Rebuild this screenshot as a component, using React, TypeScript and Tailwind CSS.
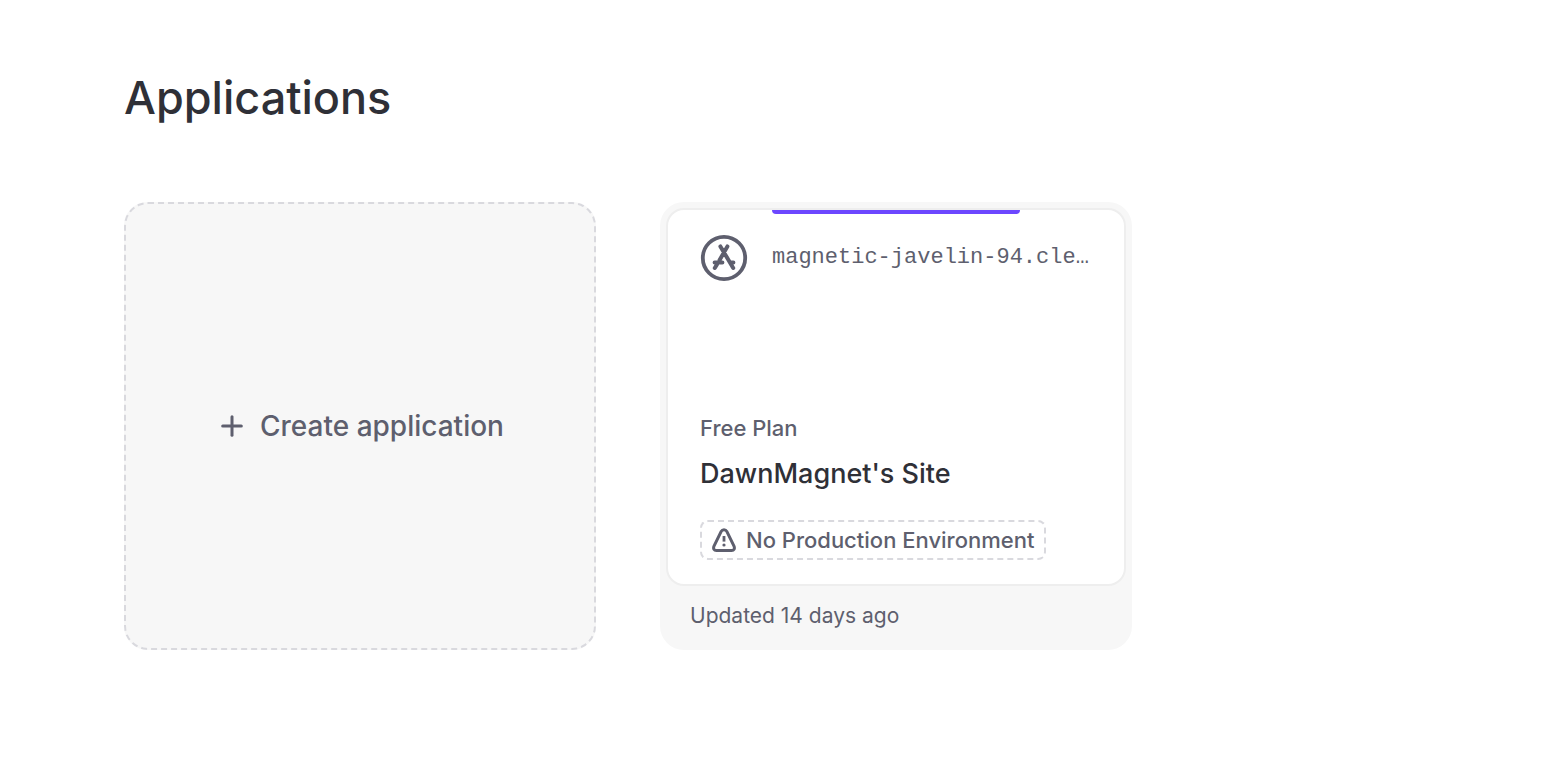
import { Plus } from 'lucide-react';

function AppStoreIcon() {
  return (
    <svg viewBox="0 0 48 48" className="size-12 shrink-0" fill="none" stroke="currentColor" strokeLinecap="round" strokeLinejoin="round" aria-hidden="true">
      <circle cx="24" cy="24" r="21.2" strokeWidth="3.8" />
      <path d="M20.4 12.4 33.2 34M27.4 12.4 19.6 26M17 30.4 14.8 34M14.6 28.4H22.4M30.4 28.4H33.4" strokeWidth="4" />
    </svg>
  );
}

function WarningIcon() {
  return (
    <svg viewBox="0 0 24 24" className="size-6 shrink-0" fill="none" stroke="currentColor" strokeLinecap="round" strokeLinejoin="round" aria-hidden="true">
      <path d="M9.2 3.4C10.4 1.1 13.6 1.1 14.8 3.4L22 18.2C23 20.5 22 22.5 19.6 22.5H4.4C2 22.5 1 20.5 2 18.2Z" strokeWidth="3" />
      <path d="M12 8V13.6" strokeWidth="2.8" strokeLinecap="butt" />
      <circle cx="12" cy="17" r="1.6" fill="currentColor" stroke="none" />
    </svg>
  );
}

function CreateCard() {
  return (
    <button
      type="button"
      className="flex h-112 cursor-pointer items-center justify-center gap-3 rounded-3xl border-2 border-dashed border-[#d9d9de] bg-[#f7f7f7] text-[28px] leading-9 font-medium text-[#5e5f6e]"
    >
      <Plus className="size-8" strokeWidth={2.25} aria-hidden="true" />
      Create application
    </button>
  );
}

type Application = {
  name: string;
  domain: string;
  plan: string;
  status: string;
  updated: string;
};

function ApplicationCard({ app }: { app: Application }) {
  return (
    <a href="#" className="flex h-112 flex-col rounded-3xl bg-[#f7f7f7] p-1.5 text-[22px] leading-8 text-[#5e5f6e]">
      <div className="relative flex flex-1 flex-col rounded-[18px] border-2 border-[#eeeeee] bg-white px-8 pt-6 pb-6">
        <span className="absolute top-0 left-26 h-1 w-62 rounded-b bg-[#6c47ff]" />
        <div className="flex items-center gap-6">
          <AppStoreIcon />
          <span className="truncate font-['Liberation_Mono',monospace]">{app.domain}</span>
        </div>
        <p className="mt-auto font-medium">{app.plan}</p>
        <h2 className="mt-3 text-[27px] leading-9 font-medium text-[#2f3037]">{app.name}</h2>
        <div className="mt-7 flex h-10 items-center gap-2.5 self-start rounded-lg border-2 border-dashed border-[#d9d9de] px-2.5 font-medium">
          <WarningIcon />
          {app.status}
        </div>
      </div>
      <p className="px-6 pt-3.5 pb-3 text-[21px] leading-8">{app.updated}</p>
    </a>
  );
}

const applications: Application[] = [
  {
    name: "DawnMagnet's Site",
    domain: 'magnetic-javelin-94.cle…',
    plan: 'Free Plan',
    status: 'No Production Environment',
    updated: 'Updated 14 days ago',
  },
];

export default function App() {
  return (
    <main className="min-h-screen bg-white px-31 pt-[66px] pb-12 font-[Inter,sans-serif]">
      <h1 className="text-[45px] leading-16 font-medium text-[#2f3037]">Applications</h1>
      <div className="mt-18 grid grid-cols-[repeat(auto-fill,minmax(0,472px))] gap-16">
        <CreateCard />
        {applications.map((app) => (
          <ApplicationCard key={app.name} app={app} />
        ))}
      </div>
    </main>
  );
}
